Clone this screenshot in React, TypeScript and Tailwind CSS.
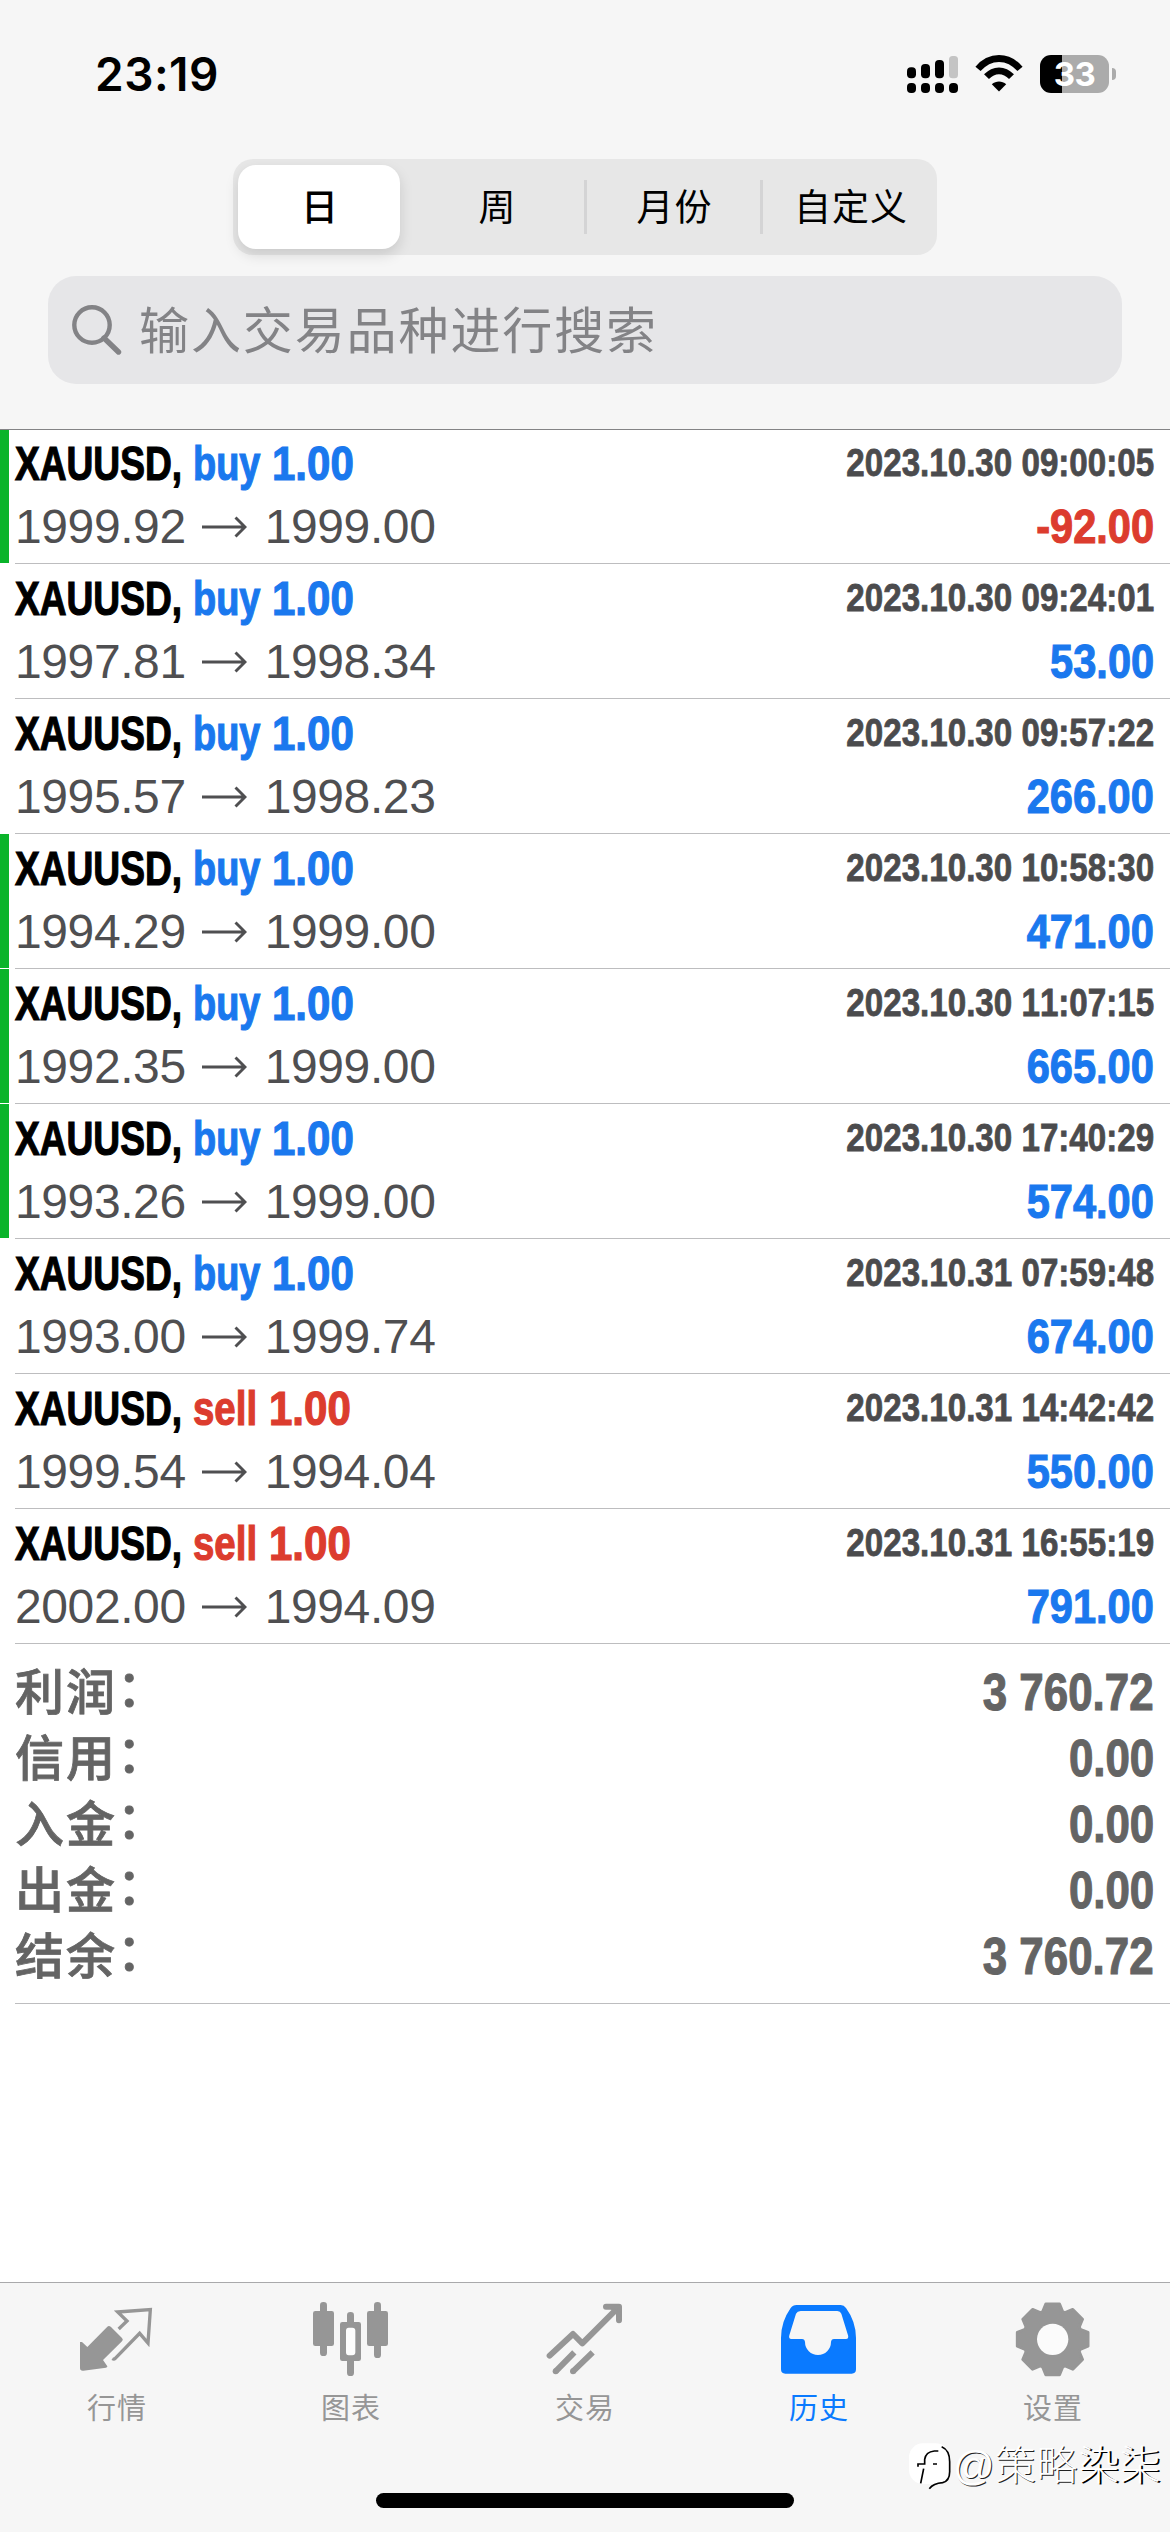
import React from "react";

type Deal = {
  side: "buy" | "sell";
  open: string;
  close: string;
  time: string;
  profit: string;
  marked?: boolean;
};

const deals: Deal[] = [
  { side: "buy", open: "1999.92", close: "1999.00", time: "2023.10.30 09:00:05", profit: "-92.00", marked: true },
  { side: "buy", open: "1997.81", close: "1998.34", time: "2023.10.30 09:24:01", profit: "53.00" },
  { side: "buy", open: "1995.57", close: "1998.23", time: "2023.10.30 09:57:22", profit: "266.00" },
  { side: "buy", open: "1994.29", close: "1999.00", time: "2023.10.30 10:58:30", profit: "471.00", marked: true },
  { side: "buy", open: "1992.35", close: "1999.00", time: "2023.10.30 11:07:15", profit: "665.00", marked: true },
  { side: "buy", open: "1993.26", close: "1999.00", time: "2023.10.30 17:40:29", profit: "574.00", marked: true },
  { side: "buy", open: "1993.00", close: "1999.74", time: "2023.10.31 07:59:48", profit: "674.00" },
  { side: "sell", open: "1999.54", close: "1994.04", time: "2023.10.31 14:42:42", profit: "550.00" },
  { side: "sell", open: "2002.00", close: "1994.09", time: "2023.10.31 16:55:19", profit: "791.00" },
];

const summary = [
  ["利润", "3 760.72"],
  ["信用", "0.00"],
  ["入金", "0.00"],
  ["出金", "0.00"],
  ["结余", "3 760.72"],
];

function StatusBar() {
  return (
    <div className="flex h-[148px] items-center justify-between pl-[95px] pr-[54px]">
      <span className="font-[Inter,sans-serif] text-[46px] font-semibold leading-none tracking-[0.5px]">23:19</span>
      <div className="flex items-center">
        <svg className="mr-[17px] h-[38px] w-[51px]" viewBox="0 0 51 38">
          <rect x="0" y="12.3" width="9" height="11" rx="4" />
          <rect x="14" y="9" width="9" height="14.3" rx="4" />
          <rect x="28" y="5" width="9" height="18.3" rx="4" />
          <rect x="42" y="1" width="9" height="22.3" rx="3.5" fill="#c4c4c4" />
          {[0, 14, 28, 42].map((x) => (
            <rect key={x} x={x} y="28" width="9" height="10" rx="4" />
          ))}
        </svg>
        <svg className="mr-[17px] h-[38px] w-[48px]" viewBox="0 0 48 38">
          <path d="M3 13.3C15-.6 33-.6 45 13.3" fill="none" stroke="#000" strokeWidth="6.8" transform="translate(0 .6)" />
          <path d="M11.5 21.7C19 13.8 29 13.8 36.5 21.7" fill="none" stroke="#000" strokeWidth="6.8" />
          <path d="M24 36.6L16.8 29.2C21 25.6 27 25.6 31.2 29.2Z" />
        </svg>
        <div className="flex h-[38px] w-[69px] items-center justify-center rounded-[11px] bg-[linear-gradient(90deg,#000_22px,#ababab_22px)]">
          <span className="font-[Inter,sans-serif] text-[33px] font-bold leading-none tracking-[-0.5px] text-white">33</span>
        </div>
        <div className="ml-[3px] h-[12px] w-[4px] rounded-r-full bg-[#ababab]" />
      </div>
    </div>
  );
}

function PeriodPicker() {
  return (
    <div className="mx-auto mt-[11px] grid h-[96px] w-[704px] grid-cols-4 items-center rounded-[20px] bg-[#e7e7e7] text-[37px] tracking-[1px]">
      <div className="ml-[5px] mr-[9px] flex h-[84px] items-center justify-center rounded-[18px] bg-white pl-[2px] pt-[3px] font-medium shadow-[0_6px_14px_rgba(0,0,0,0.13)]">
        日
      </div>
      <div className="-mr-[2px] flex h-[54px] items-center justify-center border-r-[3px] border-[#d4d4d5] pl-[2px] pt-[3px]">周</div>
      <div className="-mr-[2px] flex h-[54px] items-center justify-center border-r-[3px] border-[#d4d4d5] pl-[4px] pt-[3px]">月份</div>
      <div className="flex h-[54px] items-center justify-center pl-[4px] pt-[3px]">自定义</div>
    </div>
  );
}

function SearchBox() {
  return (
    <div className="mx-[48px] mt-[21px] flex h-[108px] items-center rounded-[28px] bg-[#e6e6e8] pl-[24px] text-[#838386]">
      <svg className="h-[50px] w-[50px]" viewBox="0 0 50 50" fill="none" stroke="currentColor">
        <circle cx="20" cy="20" r="17.7" strokeWidth="4.4" />
        <path d="M32 33L46.500 47" strokeWidth="5.400" strokeLinecap="round" />
      </svg>
      <span className="ml-[17px] pt-[4px] text-[50px] leading-none tracking-[1.9px]">输入交易品种进行搜索</span>
    </div>
  );
}

function DealRow({ deal }: { deal: Deal }) {
  const sell = deal.side === "sell";
  const loss = deal.profit.startsWith("-");
  return (
    <div className="flex h-[135px]">
      <div className={deal.marked ? "h-[134px] w-[9px] bg-[#0ab42a]" : "w-[9px]"} />
      <div className="ml-[6px] flex flex-1 flex-col border-b border-[#bdbdbf] pr-[16px] pt-[3px]">
        <div className="flex h-[63px] justify-between whitespace-nowrap font-bold leading-[63px]">
          <div className="flex text-[48px] [-webkit-text-stroke:1.2px]">
            <span className="w-[178px] origin-left scale-x-[0.773] text-black">XAUUSD,</span>
            <span className={sell ? "w-[76px] origin-left scale-x-[0.8] text-[#dc3c2e]" : "w-[79px] origin-left scale-x-[0.79] text-[#1a78ee]"}>
              {deal.side}
            </span>
            <span className={sell ? "origin-left scale-x-[0.875] text-[#dc3c2e]" : "origin-left scale-x-[0.875] text-[#1a78ee]"}>1.00</span>
          </div>
          <span className="mt-[-1px] origin-right scale-x-[0.85] text-[39px] text-[#4b4b4d] [-webkit-text-stroke:0.8px] [font-kerning:none]">{deal.time}</span>
        </div>
        <div className="flex h-[63px] justify-between text-[48px] leading-[63px]">
          <div className="flex items-center text-[#4f4f51]">
            <span className="tracking-[-0.4px]">{deal.open}</span>
            <svg className="ml-[15px] mr-[18px] mt-[1px] h-[22px] w-[46px]" viewBox="0 0 46 22" fill="none" stroke="currentColor" strokeWidth="2.900">
              <path d="M1 11H44M34.500 1.500L44 11L34.500 20.500" />
            </svg>
            <span className="tracking-[-0.4px]">{deal.close}</span>
          </div>
          <span
            className={
              loss
                ? "origin-right scale-x-[0.866] font-bold text-[#dc3c2e] [-webkit-text-stroke:1.1px]"
                : "origin-right scale-x-[0.866] font-bold text-[#1a78ee] [-webkit-text-stroke:1.1px]"
            }
          >
            {deal.profit}
          </span>
        </div>
      </div>
    </div>
  );
}

function Summary() {
  return (
    <div className="ml-[15px] border-b border-[#bdbdbf] pb-[13px] pr-[16px] pt-[16px] text-[#646464]">
      {summary.map(([label, value]) => (
        <div key={label} className="flex h-[66px] justify-between font-bold leading-[66px]">
          <span className="-mt-[4px] flex font-['Noto_Sans_CJK_SC',sans-serif] text-[49px] font-medium tracking-[2px] [-webkit-text-stroke:0.8px]">
            {label}
            <span className="-mt-[4px]">：</span>
          </span>
          <span className="origin-right scale-x-[0.86] text-[51px] [-webkit-text-stroke:1.1px]">{value}</span>
        </div>
      ))}
    </div>
  );
}

const gearPoints = Array.from({ length: 8 }, (_, i) =>
  [
    [-20, 88],
    [-11, 108],
    [11, 108],
    [20, 88],
  ]
    .map(([offset, radius]) => {
      const a = ((i * 45 + offset) * Math.PI) / 180;
      return `${(518 + radius * Math.cos(a)).toFixed(1)},${(208 + radius * Math.sin(a)).toFixed(1)}`;
    })
    .join(" "),
).join(" ");

const tabs = [
  {
    label: "行情",
    viewBox: "231 84 240 240",
    icon: (
      <>
        <path d="M240 216L246 216L262 231L322 170Q327 166 333 171L366 204Q371 209 366 214L309 270L322 289Q323 292 318 293L250 302Q240 303 240 294Z" fill="currentColor" />
        <path d="M356 177L381 153L353 126L451 119L444 219L419 190L345 266Q342 269 337 266" fill="none" stroke="currentColor" strokeWidth="10" />
      </>
    ),
  },
  {
    label: "图表",
    viewBox: "933 84 240 240",
    icon: (
      <g fill="currentColor">
        <rect x="939" y="123" width="63" height="105" rx="7" />
        <rect x="960" y="96" width="21" height="162" rx="10" />
        <rect x="1041" y="126" width="21" height="50" rx="10" />
        <rect x="1041" y="258" width="21" height="60" rx="10" />
        <rect x="1036" y="171" width="32" height="86" rx="9" fill="#fdfdfd" />
        <path fillRule="evenodd" d="M1027 156H1076Q1083 156 1083 163V266Q1083 273 1076 273H1027Q1020 273 1020 266V163Q1020 156 1027 156ZM1046 173Q1038 173 1038 182V247Q1038 256 1046 256H1057Q1066 256 1066 247V182Q1066 173 1057 173Z" />
        <rect x="1101" y="123" width="63" height="105" rx="7" />
        <rect x="1122" y="96" width="21" height="168" rx="10" />
      </g>
    ),
  },
  {
    label: "交易",
    viewBox: "195 84 240 240",
    icon: (
      <g fill="none" stroke="currentColor" strokeWidth="18" strokeLinejoin="round">
        <path d="M209 257L279 192L307 220L415 112" strokeLinecap="round" />
        <path d="M378 110H417V151" strokeLinecap="round" />
        <path d="M390 110L417 137V110Z" fill="currentColor" strokeWidth="8" />
        <path d="M227 304L283 247M279 304L338 247" />
        <circle cx="227" cy="304" r="9" fill="currentColor" stroke="none" />
        <circle cx="279" cy="304" r="9" fill="currentColor" stroke="none" />
      </g>
    ),
  },
  {
    label: "历史",
    viewBox: "897 84 240 240",
    active: true,
    icon: (
      <path
        fill="currentColor"
        fillRule="evenodd"
        d="M950 105H1082Q1092 105 1098 114Q1128 155 1128 204V298Q1128 311 1115 311H916Q903 311 903 298V204Q903 155 932 114Q938 105 950 105ZM962 123Q952 123 948 131L928 196Q925 207 934 207H966Q974 207 975 216A39 39 0 0 0 1053 216Q1054 207 1062 207H1098Q1107 207 1104 196L1084 131Q1081 123 1072 123Z"
      />
    ),
  },
  {
    label: "设置",
    viewBox: "399 84 240 240",
    icon: (
      <>
        <polygon points={gearPoints} fill="currentColor" stroke="currentColor" strokeWidth="9" strokeLinejoin="round" />
        <circle cx="518" cy="208" r="47" fill="#fbfbfb" />
      </>
    ),
  },
];

function TabBar() {
  return (
    <div className="relative flex h-[250px] flex-col items-center border-t border-[#a9a9ab] bg-[#f6f6f6] pt-[15px]">
      <div className="grid w-full grid-cols-5">
        {tabs.map((t) => (
          <div key={t.label} className={t.active ? "flex flex-col items-center text-[#0a7aff]" : "flex flex-col items-center text-[#969696]"}>
            <svg className="h-[80px] w-[80px]" viewBox={t.viewBox}>
              {t.icon}
            </svg>
            <span className="mt-[11px] text-[29px] leading-[40px] tracking-[1px]">{t.label}</span>
          </div>
        ))}
      </div>
      <div className="mb-[24px] mt-auto h-[15px] w-[418px] rounded-full bg-black" />
      <div className="absolute right-[9px] top-[157px] flex items-center">
        <svg className="h-[52px] w-[46px]" viewBox="78 520 138 156" fill="none">
          <rect x="84" y="530" width="122" height="122" rx="42" fill="#fff" />
          <g stroke="#000" strokeWidth="5">
            <path d="M111 600V592H131V578Q134 556 160 553H172" />
            <path d="M128 606L119 650M156 592H168" />
            <path d="M182 540Q206 550 206 585V615Q206 642 185 648Q157 650 145 666" />
          </g>
        </svg>
        <span className="text-[41px] font-light leading-[52px] tracking-[0.5px] text-white [text-shadow:1px_1px_0_#222]">
          @策略<span className="[text-shadow:2px_1px_0_#000]">染柒</span>
        </span>
      </div>
    </div>
  );
}

export default function App() {
  return (
    <div className="flex h-[2532px] w-[1170px] flex-col overflow-hidden bg-white font-['Liberation_Sans','Noto_Sans_CJK_SC',sans-serif] text-black">
      <header className="relative z-10 h-[430px] border-b border-[#838385] bg-[#f6f6f6]">
        <StatusBar />
        <PeriodPicker />
        <SearchBox />
      </header>
      <main className="-mt-px flex-1">
        {deals.map((d) => (
          <DealRow key={d.time} deal={d} />
        ))}
        <Summary />
      </main>
      <TabBar />
    </div>
  );
}
